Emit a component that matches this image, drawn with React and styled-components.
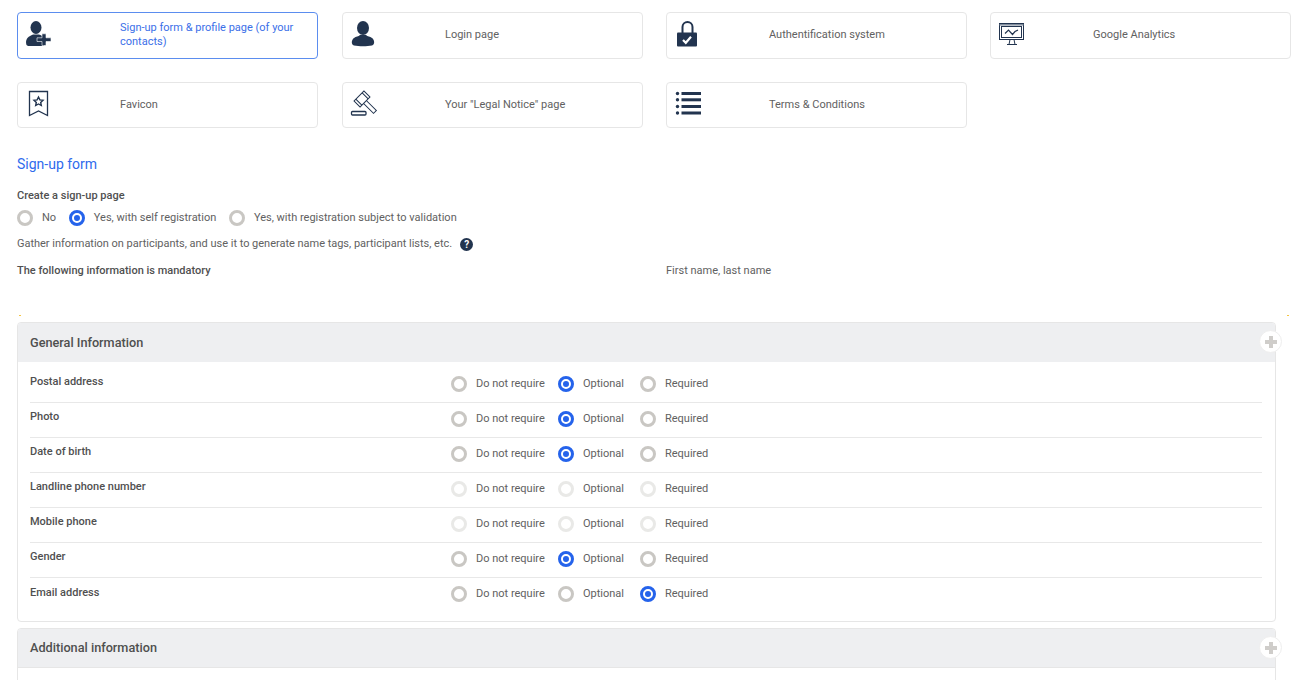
import React from 'react';
import styled, { createGlobalStyle } from 'styled-components';

const navy = '#22344f';

const GlobalStyle = createGlobalStyle`
  html, body {
    margin: 0;
    height: 680px;
    overflow: hidden;
    background: #fff;
    font-family: Roboto, "Liberation Sans", sans-serif;
    font-size: 11px;
    color: #616161;
  }
`;

const Page = styled.div`
  padding: 12px 9px 0 17px;
`;

const CardGrid = styled.div`
  display: grid;
  grid-template-columns: 325px 324px 324px 301px;
  row-gap: 23px;
`;

const Card = styled.div`
  width: 301px;
  height: ${({ $short }) => ($short ? '46px' : '47px')};
  box-sizing: border-box;
  display: flex;
  align-items: center;
  padding: 0 14px ${({ $short }) => ($short ? '0' : '2px')} 0;
  border: 1px solid ${({ $active }) => ($active ? '#5b8def' : '#e6e6e6')};
  border-radius: 4px;
  color: ${({ $active }) => ($active ? '#3b6fe8' : '#616161')};
  line-height: 14px;
`;

const CardIcon = styled.div`
  width: 102px;
  flex: none;
  height: 100%;
  padding: 6px 0 0 7px;
  box-sizing: border-box;
`;

const SectionTitle = styled.h2`
  margin: 27px 0 0;
  font-size: 14px;
  line-height: 18px;
  font-weight: 400;
  color: #2f6bed;
`;

const Field = styled.div`
  font-weight: 500;
  color: #505050;
  line-height: 14px;
  margin-top: ${({ $top }) => $top}px;
`;

const RadioRow = styled.div`
  display: flex;
  align-items: center;
  gap: 12.7px;
  margin-top: 7px;
  height: 16px;
`;

const Option = styled.label`
  display: flex;
  align-items: center;
  gap: 9px;
  line-height: 16px;
  white-space: nowrap;
`;

const Radio = styled.span`
  width: 16px;
  height: 16px;
  flex: none;
  box-sizing: border-box;
  border-radius: 50%;
  position: relative;
  background: ${({ $on }) => ($on ? '#2563eb' : '#fff')};
  border: 3px solid ${({ $on, $off }) => ($on ? '#2563eb' : $off ? '#e9e9e7' : '#c9c7c3')};

  &::after {
    content: ${({ $on }) => ($on ? '""' : 'none')};
    position: absolute;
    inset: 0;
    border: 2px solid #fff;
    border-radius: 50%;
    box-sizing: border-box;
    background: transparent;
  }
`;

const Hint = styled.div`
  display: flex;
  align-items: center;
  gap: 8px;
  margin-top: 11px;
  line-height: 14px;
  letter-spacing: -0.02px;
`;

const HelpBadge = styled.span`
  width: 13px;
  height: 13px;
  border-radius: 50%;
  background: ${navy};
  color: #fff;
  font-size: 10px;
  font-weight: 700;
  line-height: 13px;
  text-align: center;
`;

const Mandatory = styled.div`
  display: grid;
  grid-template-columns: 649px auto;
  margin-top: 13px;
  line-height: 14px;
`;

const MarkRow = styled.div`
  display: flex;
  justify-content: space-between;
  box-sizing: border-box;
  padding: 0 1px 0 2px;
  margin-top: 37px;
  width: 1273px;
`;

const Mark = styled.span`
  width: 2px;
  height: 1px;
  background: #f5c542;
`;

const Panel = styled.section`
  position: relative;
  width: 1259px;
  box-sizing: border-box;
  margin-top: 6px;
  border: 1px solid #e6e6e6;
  border-radius: 4px;
`;

const PanelHeader = styled.h3`
  margin: 0;
  height: 39px;
  padding: 0 0 1px 12px;
  box-sizing: border-box;
  display: flex;
  align-items: center;
  background: #eeeff1;
  font-size: 12.7px;
  font-weight: 500;
  color: #4f4f4f;
  border-radius: 3px 3px 0 0;
  border-bottom: ${({ $lined }) => ($lined ? '1px solid #e6e6e6' : 'none')};
`;

const Expand = styled.button`
  position: absolute;
  top: 7px;
  right: -7px;
  width: 23px;
  height: 23px;
  padding: 0;
  display: flex;
  align-items: center;
  justify-content: center;
  border: 1px solid #eeeeee;
  border-radius: 50%;
  background: #fff;
`;

const PanelBody = styled.div`
  padding: 0 13px 8px 12px;
  min-height: 40px;
`;

const Row = styled.div`
  display: grid;
  grid-template-columns: 421px 107px 82px auto;
  align-items: center;
  height: ${({ $first }) => ($first ? '41px' : '35px')};
  padding: ${({ $first }) => ($first ? '3px 0 0' : '0 0 3px')};
  box-sizing: border-box;
  border-bottom: ${({ $last }) => ($last ? 'none' : '1px solid #e8e8e8')};
`;

const RowLabel = styled.div`
  font-weight: 500;
  color: #505050;
  margin-top: -4px;
`;

const iconProps = { width: 28, height: 28, viewBox: '0 0 28 28' };

const UserPlusIcon = () => (
  <svg {...iconProps} fill={navy}>
    <ellipse cx="11" cy="8.5" rx="5.500" ry="6.500" />
    <path d="M1.500 26C0 21 2 18 8 15.500h6c3 1 4.500 2.500 5 4v7.500H3z" />
    <path d="M12 18.800h5v-4h4v4h5v3.700h-5V26.500h-4v-4h-5z" stroke="#fff" strokeWidth=".6" />
  </svg>
);

const UserIcon = () => (
  <svg {...iconProps} fill={navy}>
    <ellipse cx="13" cy="9" rx="6" ry="7" />
    <path d="M4 26.500c-3-1-2.800-5.500 0-7.500 2-1.500 4.500-1.500 6-3h6c1.500 1.500 4 1.500 6 3 2.800 2 3 6.500 0 7.500-5 1-13 1-18 0z" />
  </svg>
);

const LockIcon = () => (
  <svg {...iconProps}>
    <path d="M8.500 14V8a5 5 0 0 1 10 0v6" fill="none" stroke={navy} strokeWidth="2" />
    <rect x="3" y="13.500" width="20" height="14" rx="1" fill={navy} />
    <path d="M9 21l2.800 2.800 5.200-6" fill="none" stroke="#fff" strokeWidth="2.200" />
  </svg>
);

const MonitorIcon = () => (
  <svg {...iconProps} fill="none" stroke={navy} strokeWidth="1">
    <rect x="1.500" y="4.500" width="24" height="16" />
    <path d="M1.500 5.800h24" strokeWidth="1.500" stroke="#7b8798" />
    <rect x="3.500" y="7.500" width="20" height="11" />
    <path d="M7 14.500l3.500-3.500 4 4.500 2.500-3 3-1.500" strokeWidth="1.200" />
    <path d="M12 20.500l-1 5M16 20.500l1 5M9 25.500h10" />
  </svg>
);

const BookmarkIcon = () => (
  <svg {...iconProps} fill="none" stroke={navy} strokeWidth="1.300">
    <path d="M4.500 2.500h18v24l-9-4.500-9 4.500z" />
    <path d="M13.500 8l1.400 2.900 3.100.4-2.300 2.100.6 3.100-2.800-1.500-2.800 1.500.6-3.100-2.300-2.100 3.100-.4z" strokeWidth="1.400" />
  </svg>
);

const GavelIcon = () => (
  <svg {...iconProps} fill="#fff" stroke={navy} strokeWidth="1">
    <rect x="14" y="10" width="15.500" height="4" transform="rotate(45 14 12)" />
    <g transform="rotate(45 12 10)">
      <rect x="7.750" y="3" width="8.500" height="14" />
      <path d="M7.750 5.500h8.500M7.750 14.500h8.500" />
    </g>
    <rect x="1.500" y="22.500" width="14.500" height="3.500" rx="1" strokeWidth="1.300" />
  </svg>
);

const ListIcon = () => (
  <svg {...iconProps} fill={navy}>
    <circle cx="3.500" cy="4.500" r="1.700" />
    <circle cx="3.500" cy="10.800" r="1.700" />
    <circle cx="3.500" cy="17.500" r="1.700" />
    <circle cx="3.500" cy="24" r="1.700" />
    <rect x="7.500" y="3" width="19.500" height="3" />
    <rect x="7.500" y="9.300" width="19.500" height="3" />
    <rect x="7.500" y="16" width="19.500" height="3" />
    <rect x="7.500" y="22.500" width="19.500" height="3" />
  </svg>
);

const PlusIcon = () => (
  <svg width="14" height="14" viewBox="0 0 14 14" fill="#cfcdca">
    <path d="M5 1h4v4h4v4H9v4H5V9H1V5h4z" />
  </svg>
);

const cards = [
  { Icon: UserPlusIcon, label: 'Sign-up form & profile page (of your contacts)', active: true },
  { Icon: UserIcon, label: 'Login page' },
  { Icon: LockIcon, label: 'Authentification system' },
  { Icon: MonitorIcon, label: 'Google Analytics' },
  { Icon: BookmarkIcon, label: 'Favicon', short: true },
  { Icon: GavelIcon, label: 'Your "Legal Notice" page', short: true },
  { Icon: ListIcon, label: 'Terms & Conditions', short: true },
];

// value: 0 do not require, 1 optional, 2 required, null greyed out
const fields = [
  ['Postal address', 1],
  ['Photo', 1],
  ['Date of birth', 1],
  ['Landline phone number', null],
  ['Mobile phone', null],
  ['Gender', 1],
  ['Email address', 2],
];

const levels = ['Do not require', 'Optional', 'Required'];

const App = () => (
  <Page>
    <GlobalStyle />
    <CardGrid>
      {cards.map(({ Icon, label, active, short }) => (
        <Card key={label} $active={active} $short={short}>
          <CardIcon>
            <Icon />
          </CardIcon>
          {label}
        </Card>
      ))}
    </CardGrid>

    <SectionTitle>Sign-up form</SectionTitle>
    <Field $top={16}>Create a sign-up page</Field>
    <RadioRow>
      <Option>
        <Radio />
        No
      </Option>
      <Option>
        <Radio $on />
        Yes, with self registration
      </Option>
      <Option>
        <Radio />
        Yes, with registration subject to validation
      </Option>
    </RadioRow>
    <Hint>
      Gather information on participants, and use it to generate name tags, participant lists, etc.
      <HelpBadge>?</HelpBadge>
    </Hint>
    <Mandatory>
      <Field $top={0}>The following information is mandatory</Field>
      <span>First name, last name</span>
    </Mandatory>

    <MarkRow>
      <Mark />
      <Mark />
    </MarkRow>

    <Panel>
      <PanelHeader>General Information</PanelHeader>
      <Expand>
        <PlusIcon />
      </Expand>
      <PanelBody>
        {fields.map(([name, value], i) => (
          <Row key={name} $first={i === 0} $last={i === fields.length - 1}>
            <RowLabel>{name}</RowLabel>
            {levels.map((level, j) => (
              <Option key={level}>
                <Radio $on={value === j} $off={value === null} />
                {level}
              </Option>
            ))}
          </Row>
        ))}
      </PanelBody>
    </Panel>

    <Panel>
      <PanelHeader $lined>Additional information</PanelHeader>
      <Expand>
        <PlusIcon />
      </Expand>
      <PanelBody />
    </Panel>
  </Page>
);

export default App;
